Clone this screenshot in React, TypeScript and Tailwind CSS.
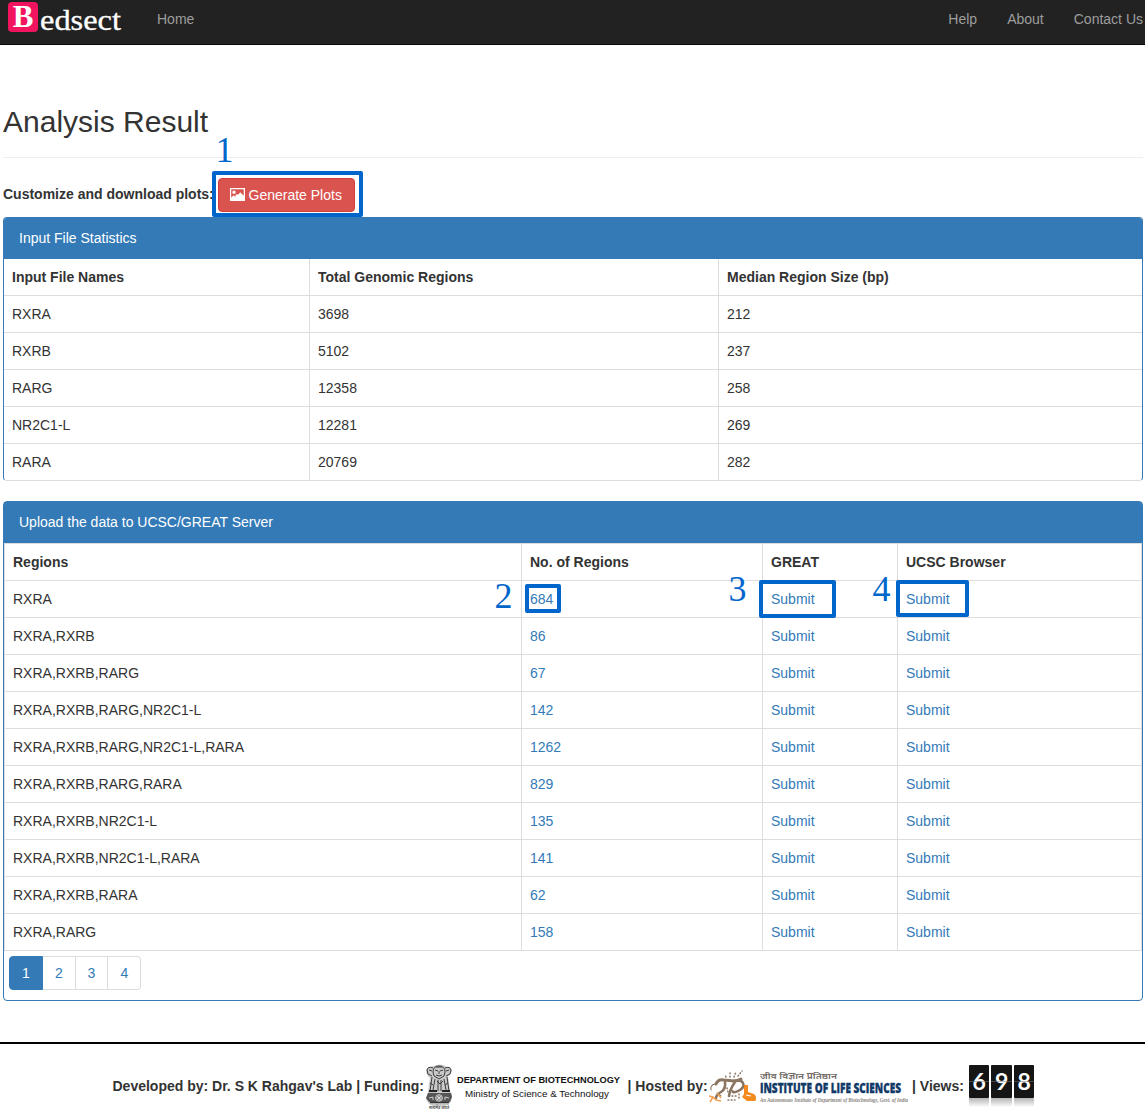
import React from "react";

const inputRows = [
  ["RXRA", "3698", "212"],
  ["RXRB", "5102", "237"],
  ["RARG", "12358", "258"],
  ["NR2C1-L", "12281", "269"],
  ["RARA", "20769", "282"],
];

const regionRows = [
  ["RXRA", "684"],
  ["RXRA,RXRB", "86"],
  ["RXRA,RXRB,RARG", "67"],
  ["RXRA,RXRB,RARG,NR2C1-L", "142"],
  ["RXRA,RXRB,RARG,NR2C1-L,RARA", "1262"],
  ["RXRA,RXRB,RARG,RARA", "829"],
  ["RXRA,RXRB,NR2C1-L", "135"],
  ["RXRA,RXRB,NR2C1-L,RARA", "141"],
  ["RXRA,RXRB,RARA", "62"],
  ["RXRA,RARG", "158"],
];

function Callout({ n, box, label }: { n: string; box: string; label: string }) {
  return (
    <>
      <span className={`pointer-events-none absolute rounded-[2px] border-4 border-[#0066cc] ${box}`} />
      <span
        className={`pointer-events-none absolute font-['Liberation_Serif',serif] text-[36px] leading-[40px] font-normal text-[#0066cc] ${label}`}
      >
        {n}
      </span>
    </>
  );
}

function Navbar() {
  return (
    <nav className="flex h-[45px] items-start border-b border-[#080808] bg-[#222] text-[#9d9d9d]">
      <div className="flex w-[142px] pl-2 pt-[2px] font-['Liberation_Serif',serif] text-white">
        <span className="flex h-[30px] w-[30px] justify-center rounded-[4px] bg-[#f2145f] text-[31px] leading-[30px] font-bold">
          B
        </span>
        <svg width="86" height="36" className="overflow-visible">
          <text
            x="2"
            y="27.5"
            fontSize="28.5"
            fill="#fff"
            stroke="#fff"
            strokeWidth=".3"
            textLength="81"
            lengthAdjust="spacingAndGlyphs"
          >
            edsect
          </text>
        </svg>
      </div>
      <a className="px-[15px] pt-[9px]">Home</a>
      <div className="ml-auto flex pt-[9px]">
        <a className="px-[15px]">Help</a>
        <a className="px-[15px]">About</a>
        <a className="pl-[15px] pr-[2px]">Contact Us</a>
      </div>
    </nav>
  );
}

function PictureIcon() {
  return (
    <svg width="15" height="14" viewBox="0 0 15 14" className="mr-[3.5px]">
      <path
        fill="#fff"
        fillRule="evenodd"
        d="M0 0h15v13H0zM1.2 1.3v8.4l2.4-2.4 1.4 1.3.9-.3-.5-1.2 1.5-.9 1.2.6 2.1-2.6 3.5 3.6V1.3zM4 2.5a1.7 1.7 0 1 1 0 3.4 1.7 1.7 0 0 1 0-3.4z"
      />
    </svg>
  );
}

function Emblem() {
  return (
    <svg width="28" height="48" viewBox="0 0 28 48" className="-ml-px shrink-0 overflow-visible">
      <path
        d="M8 2l4-1 3-.5 4 .8 2 1.5 4 .2 2 4-2 4-2 1 1 7 1 8 2 4-1 6-2 3-4 2H8l-4-2-3-5 2-6 1-9 1-6-3-3-1-5 3-3z"
        fill="#c9c9c9"
      />
      <g fill="none" stroke="#3c3c3c" strokeWidth="1">
        <path d="M8 8Q8 2 14 2t6 6l-1 4-5 3-5-3zM8 4Q3 2 2 6l1 4 4 2M20 4q5-2 6 2l-1 4-4 2" />
        <path d="M10 6l3 1M15 7l3-1M14 7v3M11 11l3 1 3-1M4 6l3 1M24 6l-3 1M11 3h6" />
        <path d="M7 13l-2 14M10 15l-2 11M13 16v11M16 16v11M19 15l2 11M22 13l2 14M5 19l3 2M23 19l-3 2M12 17l3 3 3-3" />
      </g>
      <path d="M4 27h8M17 27h8" stroke="#222" strokeWidth="2" />
      <path d="M3 29h23l1 4-2 5H4l-3-4z" fill="#555" />
      <g fill="none" stroke="#ddd" strokeWidth=".9">
        <circle cx="14" cy="34" r="3.4" />
        <path d="M11 34h6M14 31v6M12 32l4 4M16 32l-4 4M4 34l4-1v3M24 34l-4-1v3" />
      </g>
      <path d="M5 38.5h19" stroke="#333" strokeWidth="1.3" />
      <text x="4" y="44.5" fontSize="4.5" fill="#555" fontFamily="Noto Sans, sans-serif" textLength="20" lengthAdjust="spacingAndGlyphs">
        सत्यमेव जयते
      </text>
    </svg>
  );
}

function InstituteLogo() {
  return (
    <svg width="203" height="40" viewBox="0 0 203 40" className="shrink-0 overflow-visible">
      <g fill="none" stroke="#8a7561" strokeLinecap="round">
        <path d="M8 14q2-5 8-4l10 1q4 0 7-2" strokeWidth="3" />
        <path d="M17 12q1 7-4 10t-5 6M26 11q7-2 9 2t-3 7-7 2M27 12q-5 7-6 14" strokeWidth="2.6" />
        <path d="M3 20q-1-5 4-6M9 23l4 3M23 20l4 2" strokeWidth="1.1" />
        <path d="M18 7l-1-3M22 7V3M26 7l2-5M30 6l4-5M19 18l1 4M24 26h5M20 30h7M31 24v6" strokeWidth="1.5" strokeDasharray=".8 2.4" />
      </g>
      <path d="M1 26l4 1 3 3 5 1M5 27l-3 5M9 23l4 5" fill="none" stroke="#f3a052" strokeWidth="1.5" />
      <path d="M36 15h4v7l6 2q3 2 1.5 7H39l-5-4 2-3z" fill="#f58a1f" />
      <path d="M38 25l5 1" stroke="#fff" strokeWidth="1.2" />
      <text x="52" y="9" fontSize="8.5" fontWeight="600" fill="#716a65" fontFamily="Noto Sans, Noto Sans Devanagari, sans-serif" textLength="77" lengthAdjust="spacingAndGlyphs">
        जीव विज्ञान प्रतिष्ठान
      </text>
      <text x="52" y="23" fontSize="14" fontWeight="800" fill="#123a68" stroke="#123a68" strokeWidth=".35" fontFamily="Open Sans, sans-serif" textLength="141" lengthAdjust="spacingAndGlyphs">
        INSTITUTE OF LIFE SCIENCES
      </text>
      <text x="52" y="31.5" fontSize="5.5" fontStyle="italic" fill="#88827d" fontFamily="Liberation Serif, serif" textLength="148" lengthAdjust="spacingAndGlyphs">
        An Autonomous Institute of Department of Biotechnology, Govt. of India
      </text>
    </svg>
  );
}

function Counter() {
  return (
    <div className="ml-[5px] flex gap-[2px]">
      {["6", "9", "8"].map((d) => (
        <div key={d} className="w-[20.5px]">
          <div className="relative h-[33px] rounded-[1px] bg-[#151515] text-center font-['Lato',sans-serif] text-[23px] leading-[33px] font-bold text-white">
            {d}
            <span className="absolute inset-x-0 top-4 h-px bg-[#777]/50" />
          </div>
          <div className="h-[9px] bg-linear-to-b from-[#b5b5b5] to-white" />
        </div>
      ))}
    </div>
  );
}

function Footer() {
  return (
    <footer className="mt-[41px] flex h-[68px] items-start border-t-2 border-black pl-[112.5px] font-bold whitespace-nowrap">
      <span className="w-[313px] pt-8">Developed by: Dr. S K Rahgav's Lab | Funding:</span>
      <div className="flex w-[202px] pt-5">
        <Emblem />
        <svg width="170" height="42" className="shrink-0 overflow-visible" fontFamily="Liberation Sans, Arial, sans-serif" fill="#111">
          <text x="4" y="19" fontSize="9.6" fontWeight="700" textLength="163" lengthAdjust="spacingAndGlyphs">
            DEPARTMENT OF BIOTECHNOLOGY
          </text>
          <text x="12" y="33" fontSize="9.6" fontWeight="400" textLength="144" lengthAdjust="spacingAndGlyphs">
            Ministry of Science &amp; Technology
          </text>
        </svg>
      </div>
      <span className="w-[80.5px] pt-8">| Hosted by:</span>
      <div className="w-[204px] pt-[26px]">
        <InstituteLogo />
      </div>
      <span className="pt-8">| Views:</span>
      <div className="pt-[21px]">
        <Counter />
      </div>
    </footer>
  );
}

export default function App() {
  return (
    <div className="h-[1110px] w-[1145px] overflow-hidden bg-white font-['Liberation_Sans',Arial,sans-serif] text-[14px] leading-5 text-[#333]">
      <Navbar />
      <main className="pl-[3px] pr-[2px]">
        <h2 className="mt-[60px] h-[53px] border-b border-[#eee] text-[30px] leading-[33px] font-normal">Analysis Result</h2>
        <div className="relative flex h-[59px] items-start pt-5">
          <strong className="w-[215px] pt-[6px]">Customize and download plots:</strong>
          <button className="flex h-[34px] w-[137px] items-center rounded-[4px] border border-[#d43f3a] bg-[#d9534f] pl-[11px] whitespace-nowrap text-white">
            <PictureIcon />
            Generate Plots
          </button>
          <Callout n="1" box="left-[209px] top-[13px] h-[46px] w-[151px]" label="left-[212.5px] top-[-28px]" />
        </div>

        <section className="h-[264px] overflow-hidden rounded-[4px] border border-[#337ab7] border-b-[#ddd]">
          <div className="h-[41px] bg-[#337ab7] px-[15px] py-[10px] text-white">Input File Statistics</div>
          {[["Input File Names", "Total Genomic Regions", "Median Region Size (bp)"], ...inputRows].map((row, i) => (
            <div
              key={row[0]}
              className={`grid h-[37px] grid-cols-[306px_409px_1fr] border-b border-[#ddd] ${i === 0 ? "font-bold" : ""}`}
            >
              <div className="border-r border-[#ddd] p-2">{row[0]}</div>
              <div className="border-r border-[#ddd] p-2">{row[1]}</div>
              <div className="p-2">{row[2]}</div>
            </div>
          ))}
        </section>

        <section className="mt-5 h-[500px] rounded-[4px] border border-[#337ab7]">
          <div className="h-[41px] bg-[#337ab7] px-[15px] py-[10px] text-white">Upload the data to UCSC/GREAT Server</div>
          <div className="border-x border-t border-[#ddd]">
            <div className="grid h-[37px] grid-cols-[517px_241px_135px_1fr] border-b border-[#ddd] font-bold">
              <div className="border-r border-[#ddd] p-2">Regions</div>
              <div className="border-r border-[#ddd] p-2">No. of Regions</div>
              <div className="border-r border-[#ddd] p-2">GREAT</div>
              <div className="p-2">UCSC Browser</div>
            </div>
            {regionRows.map(([name, count], i) => (
              <div
                key={name}
                className="relative grid h-[37px] grid-cols-[517px_241px_135px_1fr] border-b border-[#ddd] text-[#337ab7]"
              >
                <div className="border-r border-[#ddd] p-2 text-[#333]">{name}</div>
                <div className="border-r border-[#ddd] p-2">{count}</div>
                <div className="border-r border-[#ddd] p-2">Submit</div>
                <div className="p-2">Submit</div>
                {i === 0 && (
                  <>
                    <Callout n="2" box="left-[520px] top-[3px] h-[29px] w-[36px]" label="left-[489.5px] top-[-5px]" />
                    <Callout n="3" box="left-[754px] top-[-1px] h-[38px] w-[77px]" label="left-[723.5px] top-[-12px]" />
                    <Callout n="4" box="left-[891px] top-[-1px] h-[37px] w-[73px]" label="left-[867.5px] top-[-12px]" />
                  </>
                )}
              </div>
            ))}
          </div>
          <div className="ml-[5px] mt-[5px] flex h-[34px] w-[132px] text-center leading-8 text-[#337ab7]">
            <a className="w-[34px] rounded-l-[4px] border border-[#337ab7] bg-[#337ab7] text-white">1</a>
            <a className="w-[33px] border-y border-r border-[#ddd]">2</a>
            <a className="w-[32px] border-y border-r border-[#ddd]">3</a>
            <a className="w-[33px] rounded-r-[4px] border-y border-r border-[#ddd] pl-px">4</a>
          </div>
        </section>
      </main>
      <Footer />
    </div>
  );
}
